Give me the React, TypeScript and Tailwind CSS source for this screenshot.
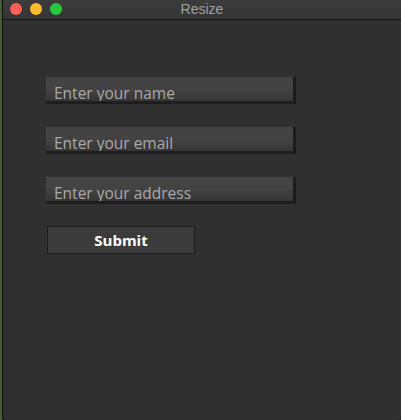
import React from "react";

const Field = ({ placeholder }: { placeholder: string }) => {
  return (
    <div className="flex w-[250px] h-[27px]">
      <div className="flex flex-col flex-1">
        <div className="flex-1 flex items-end pl-[8px] bg-gradient-to-b from-[#444444] via-[#434343] to-[#363636]">
          <span className="text-[15.5px] leading-[15px] text-[#a9a9a9]" style={{ fontFamily: '"Open Sans", "Noto Sans", sans-serif' }}>
            {placeholder}
          </span>
        </div>
        <div className="h-[3px] bg-[#1e1e1e]"></div>
      </div>
      <div className="w-[3px] bg-[#1c1c1c]"></div>
    </div>
  );
};

const App = () => {
  return (
    <div className="flex w-[401px] h-[420px] bg-[#262626]">
      <div className="w-[2px] bg-[#4a5a3a]"></div>
      <div className="flex flex-col flex-1 border-l border-[#111111] rounded-b-[5px] overflow-hidden bg-[#303030]">
        <div className="relative flex items-center justify-center h-[20px] bg-gradient-to-b from-[#3c3c3c] to-[#353535] border-b border-[#121212]">
          <div className="absolute left-[7px] top-[3px] flex gap-[8px]">
            <div className="w-[12px] h-[12px] rounded-full bg-[#fe5f57]"></div>
            <div className="w-[12px] h-[12px] rounded-full bg-[#febc2e]"></div>
            <div className="w-[12px] h-[12px] rounded-full bg-[#28c840]"></div>
          </div>
          <span className="text-[14px] text-[#a0a0a0]" style={{ fontFamily: '"Liberation Sans", Arial, sans-serif' }}>Resize</span>
        </div>
        <div className="flex flex-col gap-[23px] pl-[43px] pt-[57px]">
          <Field placeholder="Enter your name" />
          <Field placeholder="Enter your email" />
          <Field placeholder="Enter your address" />
          <button className="ml-[1px] mt-[-1px] w-[148px] h-[28px] bg-[#3b3b3b] border border-[#1e1e1e] text-white font-bold text-[15px]" style={{ fontFamily: '"Open Sans", "Noto Sans", sans-serif' }}>
            Submit
          </button>
        </div>
      </div>
    </div>
  );
};

export default App;
